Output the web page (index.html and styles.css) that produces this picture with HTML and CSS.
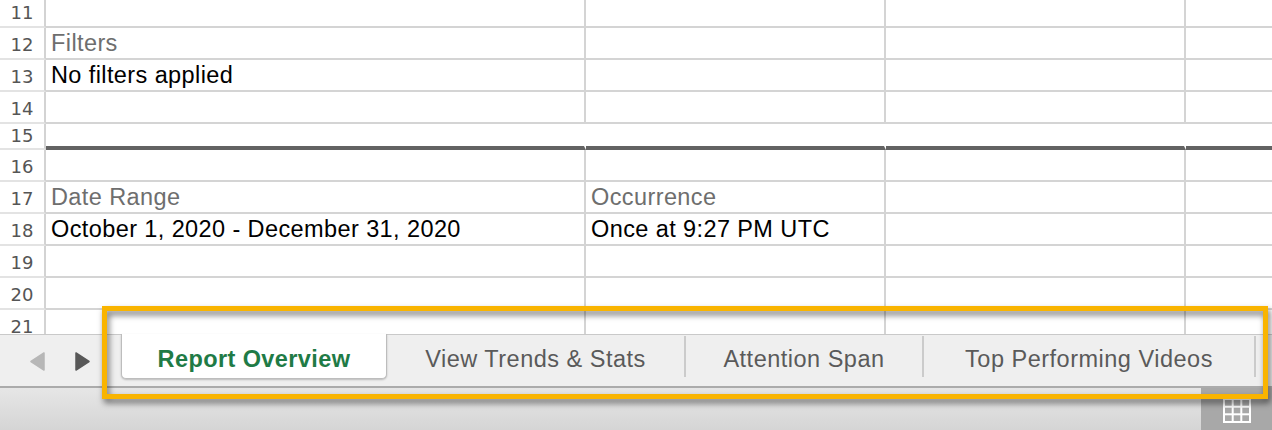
FILE: index.html
```html
<!DOCTYPE html>
<html>
<head>
<meta charset="utf-8">
<link rel="stylesheet" href="styles.css">
</head>
<body>
<div class="app">
  <div class="sheet">
    <div class="rows">
      <div class="row"><div class="rh">11</div><div class="c cb"></div><div class="c cc"></div><div class="c cd"></div><div class="c ce"></div></div>
      <div class="row"><div class="rh">12</div><div class="c cb label">Filters</div><div class="c cc"></div><div class="c cd"></div><div class="c ce"></div></div>
      <div class="row"><div class="rh">13</div><div class="c cb">No filters applied</div><div class="c cc"></div><div class="c cd"></div><div class="c ce"></div></div>
      <div class="row"><div class="rh">14</div><div class="c cb"></div><div class="c cc"></div><div class="c cd"></div><div class="c ce"></div></div>
      <div class="row thick"><div class="rh">15</div><div class="c cb"></div><div class="c cc"></div><div class="c cd"></div><div class="c ce"></div></div>
      <div class="row"><div class="rh">16</div><div class="c cb"></div><div class="c cc"></div><div class="c cd"></div><div class="c ce"></div></div>
      <div class="row"><div class="rh">17</div><div class="c cb label">Date Range</div><div class="c cc label">Occurrence</div><div class="c cd"></div><div class="c ce"></div></div>
      <div class="row"><div class="rh">18</div><div class="c cb">October 1, 2020 - December 31, 2020</div><div class="c cc">Once at 9:27 PM UTC</div><div class="c cd"></div><div class="c ce"></div></div>
      <div class="row"><div class="rh">19</div><div class="c cb"></div><div class="c cc"></div><div class="c cd"></div><div class="c ce"></div></div>
      <div class="row"><div class="rh">20</div><div class="c cb"></div><div class="c cc"></div><div class="c cd"></div><div class="c ce"></div></div>
      <div class="row"><div class="rh">21</div><div class="c cb"></div><div class="c cc"></div><div class="c cd"></div><div class="c ce"></div></div>
    </div>
  </div>
  <div class="tabbar">
    <div class="nav">
      <svg class="arr" width="15" height="19" viewBox="0 0 15 19"><path d="M14 1 L14 18 L1 9.5 Z" fill="#b7b7b7" stroke="#b7b7b7" stroke-width="1.5" stroke-linejoin="round"/></svg>
      <svg class="arr" width="15" height="19" viewBox="0 0 15 19"><path d="M1 1 L1 18 L14 9.5 Z" fill="#585858" stroke="#585858" stroke-width="1.5" stroke-linejoin="round"/></svg>
    </div>
    <div class="tab active">Report Overview</div>
    <div class="tab t2">View Trends &amp; Stats</div>
    <div class="tab t3">Attention Span</div>
    <div class="tab t4">Top Performing Videos</div>
  </div>
  <div class="status">
    <div class="status-fill"></div>
    <div class="viewbtn">
      <svg width="28" height="25" viewBox="0 0 28 25"><g fill="none" stroke="#ffffff" stroke-width="2"><rect x="1" y="1" width="26" height="23"/><line x1="9.7" y1="1" x2="9.7" y2="24"/><line x1="18.3" y1="1" x2="18.3" y2="24"/><line x1="1" y1="8.7" x2="27" y2="8.7"/><line x1="1" y1="16.3" x2="27" y2="16.3"/></g></svg>
    </div>
  </div>
  <div class="highlight"></div>
</div>
</body>
</html>
```

FILE: styles.css
```css
html, body {
  margin: 0;
  padding: 0;
  background: #ffffff;
}
body {
  width: 1272px;
  height: 430px;
  overflow: hidden;
}
.app {
  position: relative;
  width: 1272px;
  height: 430px;
  display: flex;
  flex-direction: column;
  overflow: hidden;
}
.sheet {
  flex: none;
  height: 334px;
  overflow: hidden;
}
.rows {
  margin-top: -4px;
}
.row {
  display: flex;
  height: 32px;
}
.rh {
  flex: none;
  width: 46px;
  box-sizing: border-box;
  border-right: 2px solid #d3d3d3;
  border-bottom: 2px solid #e3e3e3;
  text-align: center;
  font-family: "DejaVu Sans", sans-serif;
  font-size: 18px;
  color: #555555;
  padding-top: 4px;
  line-height: 26px;
}
.c {
  box-sizing: border-box;
  border-right: 2px solid #d4d4d4;
  border-bottom: 2px solid #d4d4d4;
  padding-left: 5px;
  padding-top: 1px;
  font-family: "Liberation Sans", Arial, sans-serif;
  font-size: 23.5px;
  letter-spacing: 0.4px;
  line-height: 29px;
  color: #000000;
  white-space: nowrap;
}
.c.label {
  color: #6e6e6e;
}
.cb { flex: none; width: 540px; }
.cc { flex: none; width: 300px; }
.cd { flex: none; width: 300px; }
.ce { flex: 1; border-right: none; }
.row.thick {
  height: 26px;
}
.row.thick .rh {
  padding-top: 1px;
  line-height: 22px;
}
.row.thick .c {
  border-bottom: 4px solid #636363;
  border-right-color: transparent;
}

.tabbar {
  flex: none;
  height: 54px;
  box-sizing: border-box;
  border-top: 1px solid #c9c9c9;
  border-bottom: 2px solid #ababab;
  background: #efefef;
  display: flex;
  align-items: flex-start;
  font-family: "Liberation Sans", Arial, sans-serif;
  font-size: 23.5px;
  letter-spacing: 0.5px;
}
.nav {
  flex: none;
  width: 121px;
  height: 51px;
  box-sizing: border-box;
  padding-left: 30px;
  padding-top: 17px;
  display: flex;
  align-items: flex-start;
  gap: 30px;
}
.arr {
  display: block;
}
.tab {
  flex: none;
  box-sizing: border-box;
  margin-top: 1px;
  height: 41px;
  padding-top: 9px;
  line-height: 28px;
  text-align: center;
  color: #5a5a5a;
  border-right: 2px solid #cbcbcb;
  white-space: nowrap;
}
.tab.active {
  width: 266px;
  margin-top: -1px;
  height: 45px;
  padding-top: 11px;
  background: #ffffff;
  color: #1f7b46;
  font-weight: bold;
  letter-spacing: 0.4px;
  border: 1px solid #bdbdbd;
  border-top: none;
  border-radius: 0 0 5px 5px;
  box-shadow: 0 1px 2px rgba(0, 0, 0, 0.22);
}
.t2 { width: 299px; }
.t3 { width: 238px; }
.t4 { width: 332px; }

.status {
  flex: 1;
  display: flex;
}
.status-fill {
  flex: 1;
  background: linear-gradient(#e6e6e6, #d5d5d5);
}
.viewbtn {
  flex: none;
  width: 71px;
  background: #a8a8a8;
  box-sizing: border-box;
  padding-left: 22px;
  padding-top: 10px;
}
.viewbtn svg {
  display: block;
}

.highlight {
  position: absolute;
  left: 102px;
  top: 306px;
  width: 1166px;
  height: 93px;
  box-sizing: border-box;
  border: 5px solid #f9b400;
  filter: drop-shadow(2px 4px 3px rgba(0, 0, 0, 0.55));
  pointer-events: none;
}
```
